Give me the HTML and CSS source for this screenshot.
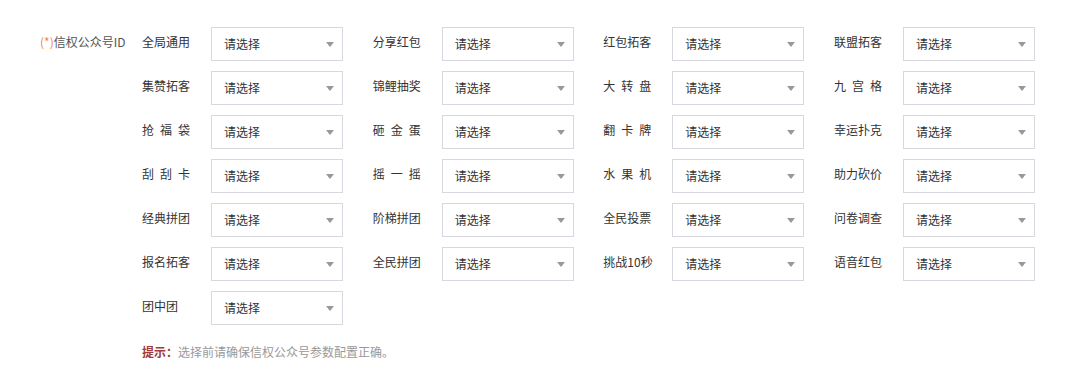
FILE: index.html
```html
<!DOCTYPE html>
<html lang="zh-CN">
<head>
    <meta charset="UTF-8">
    <meta name="viewport" content="width=device-width, initial-scale=1.0">
    <title>信权公众号配置</title>
    <link rel="stylesheet" href="styles.css">
</head>
<body>
    <div class="container">
        <div class="form-row">
            <div class="field-label"><span class="required">(*)</span>信权公众号ID</div>
            <div class="field-body">
                <div class="option-grid">
                    <div class="option"><span class="option-name">全局通用</span><div class="select"><span>请选择</span><i class="caret"></i></div></div>
                    <div class="option"><span class="option-name">分享红包</span><div class="select"><span>请选择</span><i class="caret"></i></div></div>
                    <div class="option"><span class="option-name">红包拓客</span><div class="select"><span>请选择</span><i class="caret"></i></div></div>
                    <div class="option"><span class="option-name">联盟拓客</span><div class="select"><span>请选择</span><i class="caret"></i></div></div>

                    <div class="option"><span class="option-name">集赞拓客</span><div class="select"><span>请选择</span><i class="caret"></i></div></div>
                    <div class="option"><span class="option-name">锦鲤抽奖</span><div class="select"><span>请选择</span><i class="caret"></i></div></div>
                    <div class="option"><span class="option-name spread">大转盘</span><div class="select"><span>请选择</span><i class="caret"></i></div></div>
                    <div class="option"><span class="option-name spread">九宫格</span><div class="select"><span>请选择</span><i class="caret"></i></div></div>

                    <div class="option"><span class="option-name spread">抢福袋</span><div class="select"><span>请选择</span><i class="caret"></i></div></div>
                    <div class="option"><span class="option-name spread">砸金蛋</span><div class="select"><span>请选择</span><i class="caret"></i></div></div>
                    <div class="option"><span class="option-name spread">翻卡牌</span><div class="select"><span>请选择</span><i class="caret"></i></div></div>
                    <div class="option"><span class="option-name">幸运扑克</span><div class="select"><span>请选择</span><i class="caret"></i></div></div>

                    <div class="option"><span class="option-name spread">刮刮卡</span><div class="select"><span>请选择</span><i class="caret"></i></div></div>
                    <div class="option"><span class="option-name spread">摇一摇</span><div class="select"><span>请选择</span><i class="caret"></i></div></div>
                    <div class="option"><span class="option-name spread">水果机</span><div class="select"><span>请选择</span><i class="caret"></i></div></div>
                    <div class="option"><span class="option-name">助力砍价</span><div class="select"><span>请选择</span><i class="caret"></i></div></div>

                    <div class="option"><span class="option-name">经典拼团</span><div class="select"><span>请选择</span><i class="caret"></i></div></div>
                    <div class="option"><span class="option-name">阶梯拼团</span><div class="select"><span>请选择</span><i class="caret"></i></div></div>
                    <div class="option"><span class="option-name">全民投票</span><div class="select"><span>请选择</span><i class="caret"></i></div></div>
                    <div class="option"><span class="option-name">问卷调查</span><div class="select"><span>请选择</span><i class="caret"></i></div></div>

                    <div class="option"><span class="option-name">报名拓客</span><div class="select"><span>请选择</span><i class="caret"></i></div></div>
                    <div class="option"><span class="option-name">全民拼团</span><div class="select"><span>请选择</span><i class="caret"></i></div></div>
                    <div class="option"><span class="option-name">挑战10秒</span><div class="select"><span>请选择</span><i class="caret"></i></div></div>
                    <div class="option"><span class="option-name">语音红包</span><div class="select"><span>请选择</span><i class="caret"></i></div></div>

                    <div class="option"><span class="option-name">团中团</span><div class="select"><span>请选择</span><i class="caret"></i></div></div>
                </div>

                <p class="tip"><strong>提示：</strong>选择前请确保信权公众号参数配置正确。</p>
            </div>
        </div>
    </div>
</body>
</html>
```

FILE: styles.css
```css
:root {
    --text-color: #333;
    --muted-color: #999;
    --border-color: #d7d8df;
    --required-color: #f0883a;
    --tip-color: #9e3b3b;
}

* {
    box-sizing: border-box;
    margin: 0;
    padding: 0;
}

body {
    font-family: "Noto Sans CJK SC", "Liberation Sans", sans-serif;
    font-size: 12px;
    line-height: 18px;
    color: var(--text-color);
    background-color: #fff;
}

.container {
    padding: 27px 0 0 40px;
}

.form-row {
    display: flex;
}

.field-label {
    width: 102px;
    padding-top: 6px;
    color: #555;
}

.required {
    color: var(--required-color);
}

.option-grid {
    display: grid;
    grid-template-columns: repeat(4, 201px);
    column-gap: 29.67px;
    row-gap: 10px;
}

.option {
    display: flex;
}

.option-name {
    width: 69px;
    padding-top: 6px;
    white-space: nowrap;
}

.option-name.spread {
    letter-spacing: 6px;
}

.select {
    width: 132px;
    height: 34px;
    border: 1px solid var(--border-color);
    background-color: #fff;
    display: flex;
    align-items: center;
    justify-content: space-between;
    padding: 0 8px 0 12px;
    color: var(--text-color);
}

.caret {
    width: 0;
    height: 0;
    border-left: 4px solid transparent;
    border-right: 4px solid transparent;
    border-top: 5px solid var(--muted-color);
}

.tip {
    margin-top: 18px;
    color: var(--muted-color);
}

.tip strong {
    color: var(--tip-color);
    font-weight: bold;
}
```
